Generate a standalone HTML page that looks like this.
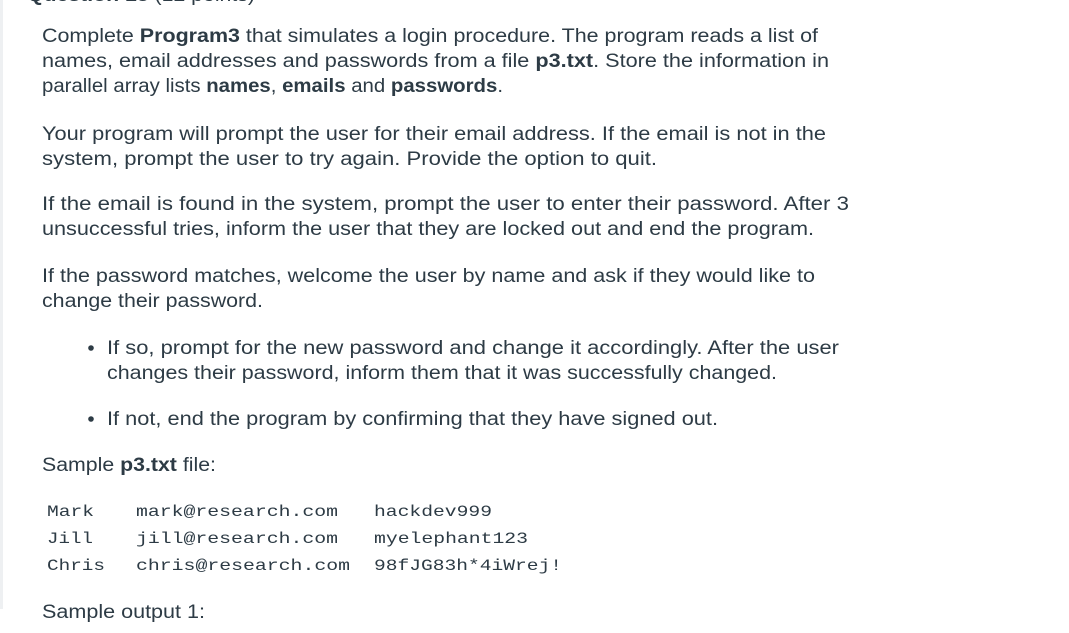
<!DOCTYPE html>
<html><head><meta charset="utf-8"><style>
html,body{margin:0;padding:0;background:#fff;width:1069px;height:633px;overflow:hidden}
svg{display:block}
.t{font-family:"Liberation Sans",sans-serif;font-size:19px;fill:#2d3b45}
.b{font-weight:bold}
.c{font-family:"Liberation Mono",monospace;font-size:16px;fill:#2d3b45}
</style></head><body>
<svg width="1069" height="633" xmlns="http://www.w3.org/2000/svg">
<rect x="0" y="0" width="3" height="609" fill="#eef0f2"/>
<text class="t b" x="27" y="1" font-size="23" textLength="228" lengthAdjust="spacingAndGlyphs">Question 13 <tspan font-weight="normal">(12 points)</tspan></text>
<text class="t" x="42" y="42" textLength="776" lengthAdjust="spacingAndGlyphs">Complete <tspan class="b">Program3</tspan> that simulates a login procedure.  The program reads a list of</text>
<text class="t" x="42" y="67" textLength="787" lengthAdjust="spacingAndGlyphs">names, email addresses and passwords from a file <tspan class="b">p3.txt</tspan>.   Store the information in</text>
<text class="t" x="42" y="92" textLength="461" lengthAdjust="spacingAndGlyphs">parallel array lists <tspan class="b">names</tspan>, <tspan class="b">emails</tspan> and <tspan class="b">passwords</tspan>.</text>
<text class="t" x="42" y="140" textLength="784" lengthAdjust="spacingAndGlyphs">Your program will prompt the user for their email address. If the email is not in the</text>
<text class="t" x="42" y="165" textLength="615" lengthAdjust="spacingAndGlyphs">system, prompt the user to try again.  Provide the option to quit.</text>
<text class="t" x="42" y="210" textLength="807" lengthAdjust="spacingAndGlyphs">If the email is found in the system, prompt the user to enter their password.   After 3</text>
<text class="t" x="42" y="235" textLength="772" lengthAdjust="spacingAndGlyphs">unsuccessful tries, inform the user that they are locked out and end the program.</text>
<text class="t" x="42" y="282" textLength="773" lengthAdjust="spacingAndGlyphs">If the password matches, welcome the user by name and ask if they would like to</text>
<text class="t" x="42" y="307" textLength="221" lengthAdjust="spacingAndGlyphs">change their password.</text>
<circle cx="91" cy="348" r="2.8" fill="#2d3b45"/>
<text class="t" x="107" y="354" textLength="732" lengthAdjust="spacingAndGlyphs">If so, prompt for the new password and change it accordingly.  After the user</text>
<text class="t" x="107" y="379" textLength="670" lengthAdjust="spacingAndGlyphs">changes their password, inform them that it was successfully changed.</text>
<circle cx="91" cy="419" r="2.8" fill="#2d3b45"/>
<text class="t" x="107" y="425" textLength="611" lengthAdjust="spacingAndGlyphs">If not, end the program by confirming that they have signed out.</text>
<text class="t" x="42" y="471" textLength="174" lengthAdjust="spacingAndGlyphs">Sample <tspan class="b">p3.txt</tspan> file:</text>
<text class="c" x="47" y="516" textLength="47" lengthAdjust="spacingAndGlyphs">Mark</text>
<text class="c" x="136" y="516" textLength="202" lengthAdjust="spacingAndGlyphs">mark@research.com</text>
<text class="c" x="374" y="516" textLength="118" lengthAdjust="spacingAndGlyphs">hackdev999</text>
<text class="c" x="47" y="543" textLength="46" lengthAdjust="spacingAndGlyphs">Jill</text>
<text class="c" x="136" y="543" textLength="202" lengthAdjust="spacingAndGlyphs">jill@research.com</text>
<text class="c" x="374" y="543" textLength="154" lengthAdjust="spacingAndGlyphs">myelephant123</text>
<text class="c" x="47" y="570" textLength="58" lengthAdjust="spacingAndGlyphs">Chris</text>
<text class="c" x="136" y="570" textLength="214" lengthAdjust="spacingAndGlyphs">chris@research.com</text>
<text class="c" x="374" y="570" textLength="188" lengthAdjust="spacingAndGlyphs">98fJG83h*4iWrej!</text>
<text class="t" x="42" y="618" textLength="163" lengthAdjust="spacingAndGlyphs">Sample output 1:</text>
</svg>
</body></html>
